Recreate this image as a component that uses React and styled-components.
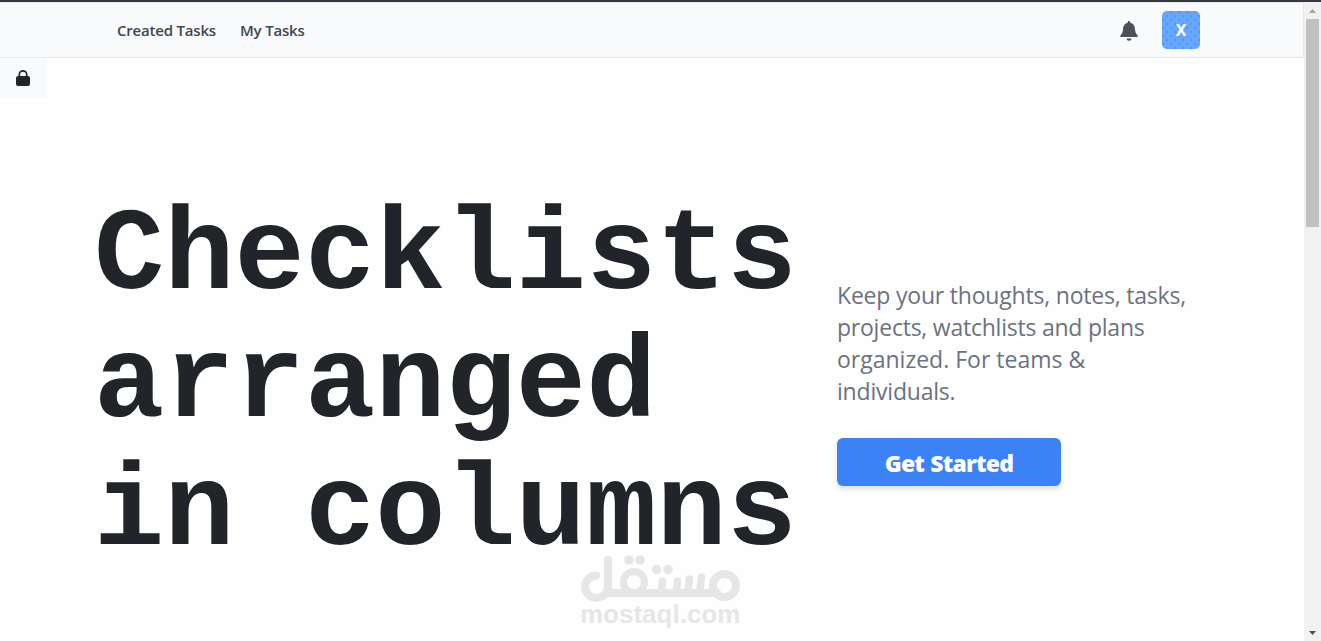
import React from 'react';
import styled, { createGlobalStyle } from 'styled-components';

const GlobalStyle = createGlobalStyle`
  * {
    box-sizing: border-box;
  }
  body {
    margin: 0;
    background: #fefefe;
    color: #212529;
    font-family: "Open Sans", "Noto Sans", sans-serif;
    overflow: hidden;
  }
`;

const Window = styled.div`
  display: flex;
  height: 641px;
  border-top: 2px solid #343744;
`;

const Page = styled.div`
  position: relative;
  flex: 1;
  min-width: 0;
`;

const Navbar = styled.header`
  display: flex;
  align-items: center;
  justify-content: space-between;
  height: 56px;
  padding: 0 103px 0 117px;
  background-color: #f9fafc;
  border: 1px solid #e5e7eb;
  border-left: 0;
`;

const Nav = styled.nav`
  display: flex;
  gap: 24px;
`;

const NavLink = styled.a`
  width: ${(props) => props.$width}px;
  font-size: 15px;
  font-weight: 600;
  line-height: 24px;
  letter-spacing: -0.2px;
  white-space: nowrap;
  color: #41464f;
`;

const Actions = styled.div`
  display: flex;
  align-items: center;
  gap: 24px;

  svg {
    margin-top: 2px;
  }
`;

const Avatar = styled.div`
  display: flex;
  align-items: center;
  justify-content: center;
  width: 38px;
  height: 38px;
  border-radius: 5px;
  background-color: #66a6fe;
  background-image: radial-gradient(#3b82f6 0.5px, transparent 0.9px), radial-gradient(#3b82f6 0.5px, transparent 0.9px);
  background-size: 8px 8px;
  background-position: 1px 1px, 5px 5px;
  color: white;
  font-family: "Noto Sans", sans-serif;
  font-size: 16px;
  font-weight: 700;
`;

const LockTab = styled.div`
  display: flex;
  align-items: center;
  width: 47px;
  height: 40px;
  padding-left: 16px;
  background-color: #f9fafc;
`;

const Hero = styled.main`
  display: flex;
  padding: 86px 0 0 94px;
`;

const Title = styled.h1`
  width: 743px;
  margin: 0;
  padding-top: 9px;
  font-family: "Liberation Mono", monospace;
  font-size: 117px;
  font-weight: 700;
  line-height: 128px;
  letter-spacing: 0.1px;
  white-space: nowrap;
`;

const Intro = styled.div`
  padding-top: 95px;
`;

const Lead = styled.p`
  margin: 0 0 31px;
  font-size: 23px;
  line-height: 32px;
  white-space: nowrap;
  color: #6b7280;
`;

const LeadLine = styled.span`
  display: block;
  letter-spacing: ${(props) => props.$spacing || 0}px;
`;

const StartButton = styled.button`
  display: block;
  width: 224px;
  height: 48px;
  padding: 3px 0 0;
  border: 0;
  border-radius: 6px;
  background-color: #3b82f6;
  box-shadow: 0 3px 5px rgba(0, 0, 0, 0.13);
  color: white;
  font-family: inherit;
  font-size: 23px;
  font-weight: 800;
  line-height: 45px;
  letter-spacing: -0.8px;
  word-spacing: 1px;
`;

const Watermark = styled.div`
  position: absolute;
  left: 580px;
  top: 552px;
  width: 161px;
  color: #e5e6e8;

  svg {
    display: block;
  }
`;

const WatermarkText = styled.div`
  margin-top: -2px;
  font-family: "Liberation Sans", sans-serif;
  font-size: 26px;
  font-weight: 700;
  line-height: 26px;
  white-space: nowrap;
`;

const Scrollbar = styled.div`
  display: flex;
  flex-direction: column;
  align-items: center;
  width: 17px;
  background-color: #f1f1f1;
`;

const ScrollArrow = styled.div`
  display: flex;
  align-items: center;
  justify-content: center;
  height: 17px;
`;

const ScrollThumb = styled.div`
  width: 13px;
  height: 208px;
  margin-bottom: auto;
  background-color: #c1c1c1;
`;

const BellIcon = () => (
  <svg width="18" height="20" viewBox="0 0 18 20">
    <path fill="#4b5157" d="M9 0C9.900 0 10.300.6 10.300 1.700C13.200 2.400 14.700 4.700 14.900 7.500C15.100 11 16 12.800 17.400 14.200C18.200 15.200 17.800 16 17 16H1C.2 16-.2 15.200.6 14.200C2 12.800 2.900 11 3.100 7.500C3.300 4.700 4.800 2.400 7.700 1.700C7.700.6 8.100 0 9 0z" />
    <path fill="#4b5157" d="M6.500 17.500h5a2.500 2.200 0 0 1-5 0z" />
  </svg>
);

const LockIcon = () => (
  <svg width="14" height="16" viewBox="0 0 14 16">
    <path fill="none" stroke="#212529" strokeWidth="1.700" d="M3.300 8V4.500a3.700 3.700 0 0 1 7.400 0V8" />
    <rect width="14" height="10" y="6" rx="2" fill="#212529" />
  </svg>
);

const WatermarkLogo = () => (
  <svg width="161" height="49" viewBox="580 554 161 49">
    <g fill="none" stroke="currentColor" strokeWidth="8" strokeLinecap="round">
      <path d="M596 575.500A11.500 11.200 0 1 0 608 586V560" />
      <path d="M606 593H717" />
      <circle cx="634" cy="582" r="10.500" strokeWidth="7" />
      <circle cx="724.500" cy="585.500" r="11.500" />
      <path d="M662.500 581L661.500 590M677.500 581L676.500 590M689.500 579L688 590M701.500 577L700 590" strokeWidth="7.500" />
    </g>
    <g fill="currentColor">
      <circle cx="629" cy="560" r="4.800" />
      <circle cx="640" cy="560" r="4.800" />
      <circle cx="656.500" cy="569.500" r="4.800" />
      <circle cx="668" cy="569.500" r="4.800" />
    </g>
  </svg>
);

const App = () => {
  return (
    <>
      <GlobalStyle />
      <Window>
        <Page>
          <Navbar>
            <Nav>
              <NavLink $width={99}>Created Tasks</NavLink>
              <NavLink $width={66}>My Tasks</NavLink>
            </Nav>
            <Actions>
              <BellIcon />
              <Avatar>X</Avatar>
            </Actions>
          </Navbar>
          <LockTab>
            <LockIcon />
          </LockTab>
          <Hero>
            <Title>
              Checklists<br />
              arranged<br />
              in columns
            </Title>
            <Intro>
              <Lead>
                <LeadLine $spacing={-0.2}>Keep your thoughts, notes, tasks,</LeadLine>
                <LeadLine $spacing={-0.23}>projects, watchlists and plans</LeadLine>
                <LeadLine>organized. For teams &amp;</LeadLine>
                <LeadLine $spacing={-0.2}>individuals.</LeadLine>
              </Lead>
              <StartButton>Get Started</StartButton>
            </Intro>
          </Hero>
          <Watermark>
            <WatermarkLogo />
            <WatermarkText>mostaql.com</WatermarkText>
          </Watermark>
        </Page>
        <Scrollbar>
          <ScrollArrow>
            <svg width="7" height="4"><path fill="#a3a3a3" d="M0 4L3.500 0L7 4z" /></svg>
          </ScrollArrow>
          <ScrollThumb />
          <ScrollArrow>
            <svg width="7" height="4"><path fill="#505050" d="M0 0H7L3.500 4z" /></svg>
          </ScrollArrow>
        </Scrollbar>
      </Window>
    </>
  );
};

export default App;
